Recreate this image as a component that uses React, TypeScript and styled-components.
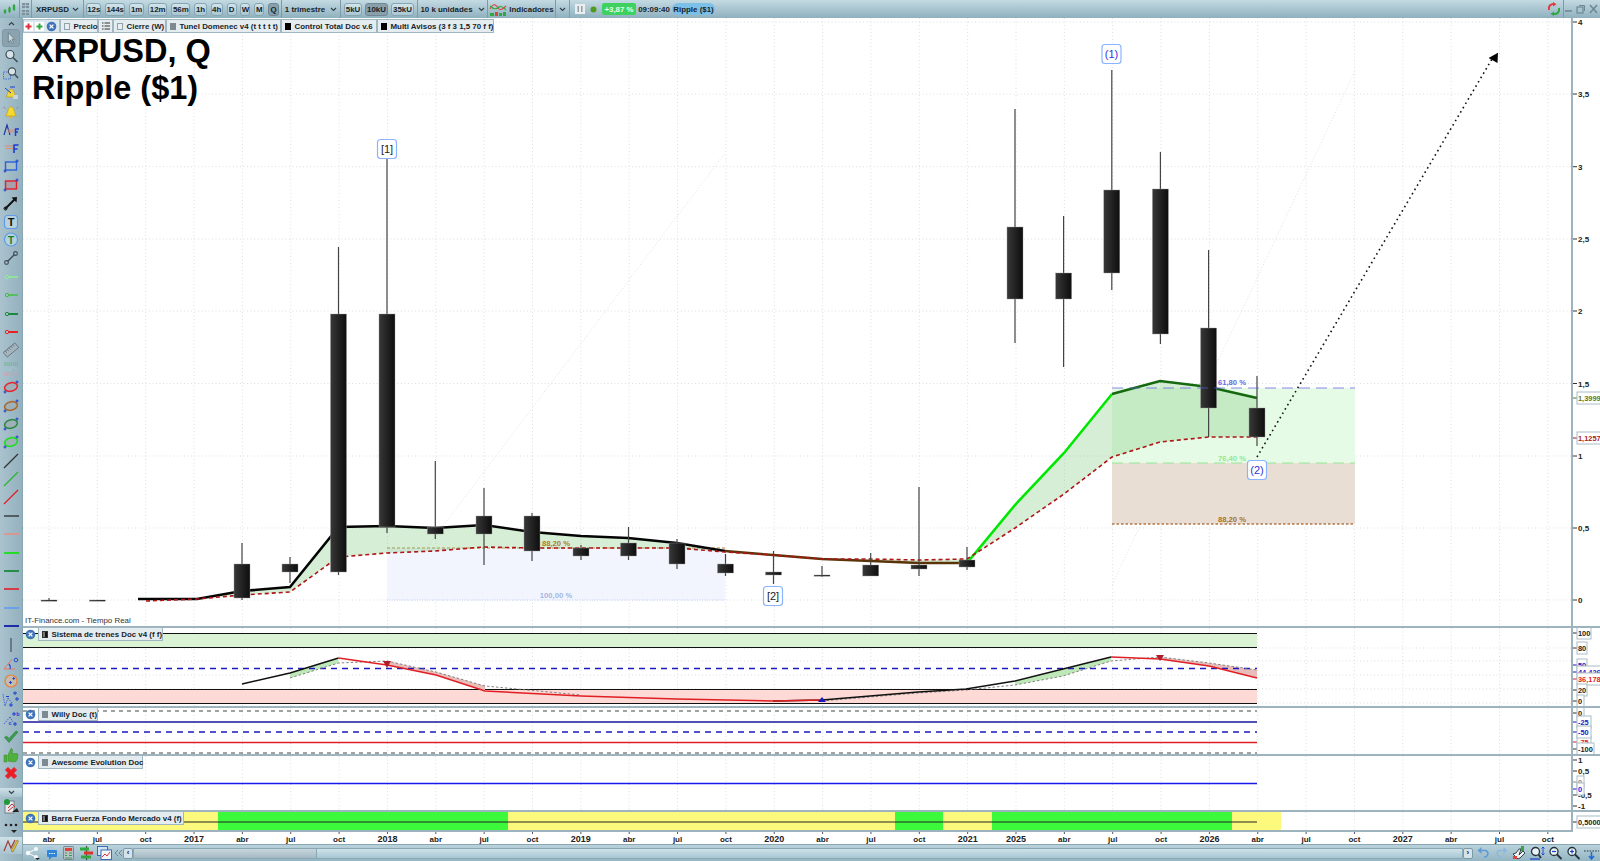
import React from 'react';
import styled, { createGlobalStyle } from 'styled-components';

const FONT = '"Liberation Sans", Arial, sans-serif';
const PLOT_END = 1257;
const AXIS_X = 1572;

type Pt = number[];
const pts = (a: Pt[]) => a.map((p) => p.join(',')).join(' ');

const qx = (i: number) => 49 + 48.35 * i;
const QUARTERS = Array.from({ length: 32 }, (_, i) => qx(i));

const CANDLES = [
  [qx(0), 598, 600, 600.6, 601],
  [qx(1), 600, 600, 600.6, 601],
  [242, 543, 564, 598, 600],
  [290, 557, 564, 572, 583],
  [338.5, 247, 314, 572, 575],
  [387, 159, 314, 527, 533],
  [435.3, 461, 527, 534, 539],
  [484, 488, 516, 534, 565],
  [532, 513, 516, 551, 561],
  [581, 545, 548, 556, 560],
  [628.5, 527, 543, 556, 560],
  [677, 539, 543, 564, 569],
  [725.5, 554, 564, 573, 576],
  [773.5, 551, 572, 575, 584],
  [822, 566, 575, 576, 577],
  [870.7, 553, 565, 576, 576],
  [919, 487, 565, 569, 576],
  [967, 547, 560, 567, 570],
  [1015, 109, 227, 299, 343],
  [1063.6, 216, 273, 299, 367],
  [1111.8, 70, 190, 273, 290],
  [1160.4, 152, 189, 334, 344],
  [1208.6, 250, 328, 408, 437],
  [1257, 376, 408, 437, 446],
];

const TOP_BLACK: Pt[] = [[138, 599], [197, 599], [242, 591], [290, 587], [338.5, 527], [387, 526], [435, 528], [484, 525], [532, 532], [581, 536], [628, 538], [677, 543], [725, 551]];
const TOP_BROWN: Pt[] = [[725, 551], [773, 555], [822, 559], [871, 561], [919, 563], [967, 563]];
const TOP_GREEN: Pt[] = [[967, 563], [1015, 505], [1064, 453], [1112, 394]];
const TOP_DARK: Pt[] = [[1112, 394], [1160, 381], [1209, 387], [1257, 398]];
const BOTTOM: Pt[] = [[146, 601], [197, 599], [242, 595], [290, 592], [338.5, 557], [387, 553], [435, 551], [484, 547], [532, 548], [581, 548], [628, 548], [677, 548], [725, 552], [773, 555], [822, 559], [871, 559], [919, 560], [967, 559], [1015, 528], [1064, 494], [1112, 457], [1160, 442], [1209, 437], [1257, 437]];
const AREA = [...TOP_BLACK.slice(1), ...TOP_BROWN.slice(1), ...TOP_GREEN.slice(1), ...TOP_DARK.slice(1), ...[...BOTTOM].reverse().slice(0, -1)];

const TIME_LABELS = ['abr', 'jul', 'oct', '2017', 'abr', 'jul', 'oct', '2018', 'abr', 'jul', 'oct', '2019', 'abr', 'jul', 'oct', '2020', 'abr', 'jul', 'oct', '2021', '2025', 'abr', 'jul', 'oct', '2026', 'abr', 'jul', 'oct', '2027', 'abr', 'jul', 'oct'];

const MAIN_TICKS: [string, number][] = [['4', 22], ['3,5', 94], ['3', 166.7], ['2,5', 239], ['2', 311], ['1,5', 383.5], ['1', 456], ['0,5', 528], ['0', 600]];

const BARS: [number, number, string][] = [
  [23, 218, '#fdf97c'],
  [218, 508, '#3cf93c'],
  [508, 895, '#fdf97c'],
  [895, 943, '#3cf93c'],
  [943, 992, '#fdf97c'],
  [992, 1232, '#3cf93c'],
  [1232, 1281, '#fdf97c'],
];

const Global = createGlobalStyle`
  html, body { margin: 0; padding: 0; overflow: hidden; background: #fff; }
  #root { width: 1600px; height: 861px; }
`;

const Page = styled.div`
  width: 1600px;
  height: 861px;
  display: flex;
  flex-direction: column;
  font-family: ${FONT};
  color: #17242b;
  overflow: hidden;
`;

const TopBar = styled.div`
  height: 18px;
  flex: none;
  display: flex;
  align-items: stretch;
  background: linear-gradient(#c4dae2, #a6c3cf 55%, #8fb0be);
  font-size: 7.9px;
  font-weight: 700;
  white-space: nowrap;
`;

const ToolCell = styled.div<{ $w: number; $gap?: number; $plain?: boolean }>`
  width: ${(p) => p.$w}px;
  flex: none;
  display: flex;
  align-items: center;
  justify-content: center;
  gap: ${(p) => p.$gap ?? 0}px;
  border-right: ${(p) => (p.$plain ? 'none' : '1px solid #7d9aa8')};
  box-sizing: border-box;
`;

const ToolButton = styled.div<{ $w: number; $active?: boolean }>`
  width: ${(p) => p.$w}px;
  height: 13px;
  flex: none;
  display: flex;
  align-items: center;
  justify-content: center;
  box-sizing: border-box;
  border: 1px solid ${(p) => (p.$active ? '#6f8894' : '#86a5b2')};
  border-radius: 3px;
  background: ${(p) => (p.$active ? '#87a0ac' : 'linear-gradient(#d3e4ea, #a9c6d1)')};
`;

const Badge = styled.div<{ $bg: string; $color: string; $w: number; $r: number }>`
  width: ${(p) => p.$w}px;
  height: 12px;
  flex: none;
  align-self: center;
  display: flex;
  align-items: center;
  justify-content: center;
  border-radius: ${(p) => p.$r}px;
  background: ${(p) => p.$bg};
  color: ${(p) => p.$color};
`;

const Spacer = styled.div`
  flex: 1;
`;

const Body = styled.div`
  flex: 1;
  display: flex;
  min-height: 0;
`;

const Rail = styled.div`
  width: 23px;
  flex: none;
  display: flex;
  flex-direction: column;
  align-items: stretch;
  background: linear-gradient(90deg, #a9c2ce, #94b1be);
  border-right: 1px solid #8aa7b4;
  box-sizing: border-box;
`;

const RailFold = styled.div<{ $h: number; $tone?: boolean }>`
  height: ${(p) => p.$h}px;
  flex: none;
  display: flex;
  align-items: center;
  justify-content: center;
  background: ${(p) => (p.$tone ? 'linear-gradient(#cfe1e8, #a8c4cf)' : 'transparent')};
`;

const RailItem = styled.div<{ $active?: boolean }>`
  height: 18.4px;
  flex: none;
  display: flex;
  align-items: center;
  justify-content: center;
  box-sizing: border-box;
  ${(p) => p.$active && 'background: #8ba3ae; border: 1px solid #7f98a4; border-radius: 3px; margin: 0 2px;'}
`;

const Column = styled.div`
  flex: 1;
  min-width: 0;
  display: flex;
  flex-direction: column;
`;

const Panel = styled.div<{ $h: number; $sep?: boolean }>`
  height: ${(p) => p.$h}px;
  flex: none;
  position: relative;
  box-sizing: border-box;
  border-top: ${(p) => (p.$sep ? '2px solid #9db4bf' : 'none')};
`;

const Plot = styled.svg`
  display: block;
`;

const LegendRow = styled.div`
  position: absolute;
  top: 1px;
  left: 0;
  display: flex;
  align-items: stretch;
  height: 14px;
  font-size: 7.9px;
  font-weight: 700;
  white-space: nowrap;
`;

const LegendTools = styled.div`
  width: 37px;
  display: flex;
  align-items: center;
  justify-content: flex-end;
  gap: 2px;
  padding-right: 2px;
  box-sizing: border-box;
  background: #dbe7ec;
  border: 1px solid #a9bfc9;
`;

const LegendItem = styled.div<{ $w: number }>`
  width: ${(p) => p.$w}px;
  display: flex;
  align-items: center;
  gap: 3.5px;
  padding-left: 3px;
  box-sizing: border-box;
  background: #e4ecf0;
  border: 1px solid #a0b7c2;
`;

const Swatch = styled.span<{ $color: string; $border?: string }>`
  width: 6px;
  height: 7px;
  flex: none;
  background: ${(p) => p.$color};
  border: 1px solid ${(p) => p.$border ?? p.$color};
  box-sizing: border-box;
`;

const SplitSwatch = styled(Swatch)`
  background: linear-gradient(90deg, #777 45%, #111 45%);
  border-color: #333;
`;

const PanelLegend = styled(LegendRow)`
  top: -1px;
  left: 1px;
  gap: 1px;
`;

const CloseCell = styled.div`
  width: 13px;
  display: flex;
  align-items: center;
  justify-content: center;
`;

const Title = styled.div`
  position: absolute;
  top: 15px;
  left: 9px;
  font-size: 32.5px;
  line-height: 36.5px;
  font-weight: 700;
  color: #000;
`;

const Source = styled.div`
  position: absolute;
  left: 2px;
  bottom: 0;
  font-size: 7.9px;
  line-height: 11px;
  color: #333;
`;

const AxisText = styled.text<{ $color?: string }>`
  font-family: ${FONT};
  font-size: 8px;
  font-weight: 700;
  fill: ${(p) => p.$color ?? '#222'};
`;

const BoxText = styled(AxisText)`
  font-size: 7.4px;
`;

const FibText = styled.text<{ $color: string }>`
  font-family: ${FONT};
  font-size: 7.7px;
  font-weight: 700;
  text-anchor: middle;
  fill: ${(p) => p.$color};
`;

const TagText = styled.text<{ $color: string }>`
  font-family: ${FONT};
  font-size: 11px;
  text-anchor: middle;
  fill: ${(p) => p.$color};
`;

const TimeText = styled.text<{ $year: boolean }>`
  font-family: ${FONT};
  font-size: ${(p) => (p.$year ? 9 : 8)}px;
  font-weight: 700;
  text-anchor: middle;
  fill: #222;
`;

const BottomBar = styled.div`
  height: 17px;
  flex: none;
  display: flex;
  align-items: center;
  background: linear-gradient(#b9d2dc, #94b5c3);
  border-top: 1px solid #8aa7b4;
  box-sizing: border-box;
`;

const BottomIcon = styled.div<{ $w: number }>`
  width: ${(p) => p.$w}px;
  flex: none;
  display: flex;
  align-items: center;
  justify-content: center;
`;

const ScrollTrack = styled.div`
  flex: 1;
  height: 11px;
  display: flex;
  box-sizing: border-box;
  border: 1px solid #8aa7b4;
  background: linear-gradient(#cfe3ea, #a6c6d3);
`;

const ScrollThumb = styled.div`
  width: 182px;
  background: linear-gradient(#c7d6dc, #a4b9c3);
  border-right: 1px solid #8aa7b4;
`;

const ScrollEnd = styled.div`
  width: 10px;
  flex: none;
  height: 11px;
  display: flex;
  align-items: center;
  justify-content: center;
  box-sizing: border-box;
  border: 1px solid #7d9aa8;
  border-radius: 2px;
  background: #d4e3e9;
  font-size: 8px;
  font-weight: 700;
  line-height: 1;
`;

/* ---- small drawings ---- */

const Chevron = ({ up }: { up?: boolean }) => (
  <svg width="7" height="5" viewBox="0 0 7 5">
    <path d={up ? 'M1 4 L3.5 1.5 L6 4' : 'M1 1 L3.5 3.5 L6 1'} fill="none" stroke="#33444c" strokeWidth="1.2" />
  </svg>
);

const Check = () => <Swatch $color="#e9eef0" $border="#8fa3ad" />;

const CloseDot = () => (
  <svg width="11" height="11" viewBox="0 0 11 11">
    <circle cx="5.5" cy="5.5" r="4.8" fill="#3f74b8" />
    <path d="M3.6 3.6 L7.4 7.4 M7.4 3.6 L3.6 7.4" stroke="#fff" strokeWidth="1.3" />
  </svg>
);

const PlusBox = ({ color }: { color: string }) => (
  <svg width="9" height="9" viewBox="0 0 9 9">
    <rect x="0" y="0" width="9" height="9" fill="#fff" />
    <path d="M4.5 1.5 V7.5 M1.5 4.5 H7.5" stroke={color} strokeWidth="2" />
  </svg>
);

const Ri = ({ children }: { children: React.ReactNode }) => (
  <svg width="18" height="18" viewBox="0 0 18 18">
    {children}
  </svg>
);

const ringLine = (color: string, w = 1.5) => (
  <Ri>
    <circle cx="5" cy="9" r="1.7" fill="none" stroke={color} strokeWidth="1" />
    <path d={`M6.7 9 H16`} stroke={color} strokeWidth={w} />
  </Ri>
);

const ellipse = (color: string) => (
  <Ri>
    <ellipse cx="9" cy="9" rx="6.5" ry="4.2" transform="rotate(-15 9 9)" fill="#9fb0b8" stroke={color} strokeWidth="1.5" />
    <path d="M1.5 14 H4.5 M3 12.5 V15.5 M13.5 4 H16.5 M15 2.5 V5.5" stroke="#1a3fd0" strokeWidth="1" />
  </Ri>
);

const diag = (color: string) => (
  <Ri>
    <path d="M2 16 L16 2" stroke={color} strokeWidth="1.2" />
  </Ri>
);

const hline = (color: string, w = 1.2) => (
  <Ri>
    <path d="M2 9 H17" stroke={color} strokeWidth={w} />
  </Ri>
);

const boxedRect = (stroke: string, fill: string) => (
  <Ri>
    <rect x="3.5" y="5" width="11" height="8" fill={fill} stroke={stroke} strokeWidth="1.4" />
    <path d="M1.5 14 H4.5 M3 12.5 V15.5 M13.5 4 H16.5 M15 2.5 V5.5" stroke="#1a3fd0" strokeWidth="1" />
  </Ri>
);

const RAIL_ICONS: React.ReactNode[] = [
  <Ri><path d="M6 3 V14 L8.5 11.5 L10.5 15 L12 14 L10 10.5 L13 10.2 Z" fill="#c9d6dc" stroke="#5d6f78" strokeWidth="0.8" /></Ri>,
  <Ri><circle cx="8" cy="7.5" r="4" fill="#d6e4ea" stroke="#3f4e56" strokeWidth="1.2" /><path d="M11 10.5 L15.5 15" stroke="#3f4e56" strokeWidth="1.6" /></Ri>,
  <Ri><rect x="1.5" y="7" width="7" height="7" fill="none" stroke="#2b5bd0" strokeWidth="0.8" strokeDasharray="1.5 1" /><circle cx="10" cy="6.5" r="3.6" fill="#d6e4ea" stroke="#3f4e56" strokeWidth="1.1" /><path d="M12.5 9 L16 13" stroke="#3f4e56" strokeWidth="1.5" /></Ri>,
  <Ri><path d="M4 13 C6 11 5 6 9 5 C13 6 12 11 14 13 Z" fill="#f1d53a" stroke="#b69a18" strokeWidth="0.6" /><path d="M3 4 L9 9 M8 3 L13 3" stroke="#1a3fd0" strokeWidth="1" /><rect x="11" y="11" width="5" height="4" fill="#c9d6dc" /></Ri>,
  <Ri><path d="M3.5 14 C6 12 5 6 9 4.5 C13 6 12 12 14.5 14 Z" fill="#f6d92f" stroke="#b69a18" strokeWidth="0.6" /><circle cx="9" cy="15" r="1.4" fill="#e8b21c" /><path d="M1.5 5 L3.5 6.5 M16.5 5 L14.5 6.5" stroke="#7b8a92" strokeWidth="1" /></Ri>,
  <Ri><path d="M2 14 L5 4 L8 14" fill="none" stroke="#1a2fa0" strokeWidth="1.1" /><path d="M6 9 H13 M6 11 H12" stroke="#e08a70" strokeWidth="1" /><path d="M13 8 H17 M13.5 8 V15 M13.5 11 H16" stroke="#1a3fd0" strokeWidth="1.5" fill="none" /></Ri>,
  <Ri><path d="M3 7 H12 M4 9.5 H12" stroke="#e08a70" strokeWidth="1" /><path d="M11.5 6 H16.5 M12 6 V14 M12 10 H15.5" stroke="#1a3fd0" strokeWidth="1.6" fill="none" /></Ri>,
  boxedRect('#2a62d8', '#a8bfca'),
  boxedRect('#e01f2a', '#a99fa8'),
  <Ri><path d="M3 15 L13 5" stroke="#111" strokeWidth="2" /><path d="M9.5 3.5 L15 3 L14.5 8.5 Z" fill="#111" /><circle cx="3.5" cy="14.5" r="1.5" fill="none" stroke="#111" strokeWidth="1" /></Ri>,
  <Ri><rect x="2.5" y="2.5" width="13" height="13" rx="3" fill="#b8d2dc" stroke="#5f9be8" strokeWidth="1.2" /><text x="9" y="13" textAnchor="middle" fontSize="11" fontWeight="700" fontFamily={FONT} fill="#111">T</text></Ri>,
  <Ri><circle cx="9" cy="8.5" r="6.5" fill="#b8d2dc" stroke="#5f9be8" strokeWidth="1.2" /><text x="9" y="12.5" textAnchor="middle" fontSize="10.5" fontWeight="700" fontFamily={FONT} fill="#14802a">T</text></Ri>,
  <Ri><path d="M5.5 12.5 L12.5 5.5" stroke="#3f4e56" strokeWidth="1.4" /><circle cx="4.5" cy="13.5" r="1.9" fill="none" stroke="#3f4e56" strokeWidth="1.1" /><circle cx="13.5" cy="4.5" r="1.9" fill="none" stroke="#3f4e56" strokeWidth="1.1" /></Ri>,
  ringLine('#8ef08e'),
  ringLine('#3fbf3f'),
  ringLine('#1a8a3a', 2),
  ringLine('#ec2222', 2),
  <Ri><g transform="rotate(-40 9 9)"><rect x="1.5" y="6" width="15" height="6" fill="#a6b6be" stroke="#5f6f78" strokeWidth="0.8" /><path d="M4 6 V8.5 M6.5 6 V8.5 M9 6 V8.5 M11.5 6 V8.5 M14 6 V8.5" stroke="#5f6f78" strokeWidth="0.7" /></g></Ri>,
  <Ri><path d="M2 3 H16 M2 5 H16" stroke="#66b27a" strokeWidth="0.9" strokeDasharray="1.5 0.7" /><path d="M2 13 H16 M2 15 H16" stroke="#e39aa0" strokeWidth="0.9" strokeDasharray="1.5 0.7" /><path d="M2 11 L5 7 L8 11 L11 6 L15 10" fill="none" stroke="#9fc6cf" strokeWidth="1" /></Ri>,
  ellipse('#e8242a'),
  ellipse('#a8672a'),
  ellipse('#2a8a3f'),
  ellipse('#18e018'),
  diag('#333'),
  diag('#2fb32f'),
  diag('#e01f2a'),
  hline('#222'),
  hline('#f08a78', 1.4),
  hline('#18e018', 1.8),
  hline('#1a8a3a', 1.8),
  hline('#e01f2a', 1.6),
  hline('#5f9bf0', 1.6),
  hline('#0c1fa8', 1.8),
  <Ri><path d="M9 2 V16" stroke="#5a6b74" strokeWidth="1.6" /></Ri>,
  <Ri><path d="M2 15 H13 M2 15 L10 5" fill="none" stroke="#e87468" strokeWidth="1" /><path d="M7 10 A5 5 0 0 1 8 15" fill="none" stroke="#1a3fd0" strokeWidth="1.2" /><circle cx="14" cy="6" r="1.8" fill="none" stroke="#1a3fd0" strokeWidth="0.9" /></Ri>,
  <Ri><circle cx="9" cy="9" r="6" fill="#c5bcae" stroke="#e8823a" strokeWidth="1.2" /><path d="M7 10.5 H10 M8.5 9 V12 M10.5 6.5 H13 M11.7 5.2 V7.8" stroke="#1a3fd0" strokeWidth="1" /></Ri>,
  <Ri><path d="M1 3 L3 15 M3 15 L6 7 M6 7 L10 12" fill="none" stroke="#1a3fd0" strokeWidth="0.7" strokeDasharray="1.5 1" /><path d="M11 2 H15 M13 0.5 V4 M13 8 H17 M15 6 V10 M7 14 H11 M9 12 V16 M4 5.5 H7" stroke="#1a3fd0" strokeWidth="1" /></Ri>,
  <Ri><path d="M2 15 L8 8 M8 8 L11 13" fill="none" stroke="#1a3fd0" strokeWidth="0.7" strokeDasharray="1.5 1" /><path d="M10 5 H14 M12 3 V7 M11 15 H15 M13 13 V17" stroke="#1a3fd0" strokeWidth="1" /><text x="16" y="7" fontSize="5.5" fontWeight="700" fontFamily={FONT} fill="#1a3fd0" textAnchor="middle">b</text><text x="8" y="16" fontSize="5.5" fontWeight="700" fontFamily={FONT} fill="#1a3fd0" textAnchor="middle">c</text></Ri>,
  <Ri><path d="M2.5 9.5 L7 14.5 L16 4 L14 3 L7 10.5 L4.5 8 Z" fill="#3c9c4e" stroke="#2a7d3c" strokeWidth="0.6" /></Ri>,
  <Ri><path d="M2 9 H5 V16 H2 Z M6 9 L9 2.5 C11 2.5 11 5 10 7.5 H15 C16.5 8 16 10 15.5 11 C15.5 13 15 14 14 15.5 C12 16 8 16 6 15 Z" fill="#4fb03c" stroke="#3a8a2c" strokeWidth="0.5" /></Ri>,
  <Ri><path d="M3.5 6 L6 3.5 L9 6.5 L12 3.5 L14.5 6 L11.5 9 L14.5 12 L12 14.5 L9 11.5 L6 14.5 L3.5 12 L6.5 9 Z" fill="#ec1c24" stroke="#ec1c24" strokeWidth="1" strokeLinejoin="round" /></Ri>,
];

const LogoCandles = () => (
  <svg width="13" height="12" viewBox="0 0 13 12">
    <path d="M2 6 V11 M6.5 3.5 V10 M11 1 V8" stroke="#2d8a3a" strokeWidth="0.8" />
    <rect x="0.8" y="7" width="2.4" height="3" fill="#2fa83f" />
    <rect x="5.3" y="4.5" width="2.4" height="4.5" fill="#2fa83f" />
    <rect x="9.8" y="2" width="2.4" height="5" fill="#2fa83f" />
  </svg>
);

const Grip = () => (
  <svg width="7" height="12" viewBox="0 0 7 12">
    <rect x="0" y="0" width="7" height="5" fill="#7d929c" />
    <rect x="0" y="7" width="7" height="5" fill="#7d929c" />
    <path d="M3.5 0 V12 M0 2.5 H7 M0 9.5 H7" stroke="#b6c8d0" strokeWidth="0.7" />
  </svg>
);

const IndicatorsIcon = () => (
  <svg width="18" height="14" viewBox="0 0 18 14">
    <rect x="1" y="11" width="4" height="3" fill="#2fa83f" />
    <rect x="6" y="10" width="3" height="4" fill="#d04a3a" />
    <rect x="10" y="11" width="3" height="3" fill="#2fa83f" />
    <rect x="14" y="10" width="3" height="4" fill="#2fa83f" />
    <path d="M1 7 C4 1 7 2 9 6 C11 9 14 7 17 4" fill="none" stroke="#e0423a" strokeWidth="1.1" />
    <path d="M1 4 C4 7 7 8 10 5 C12 3 15 6 17 8" fill="none" stroke="#2fa83f" strokeWidth="1.1" />
  </svg>
);

const PauseIcon = () => (
  <svg width="10" height="10" viewBox="0 0 10 10">
    <rect width="10" height="10" fill="#e9eef0" />
    <path d="M3.2 2 V8 M6.8 2 V8" stroke="#8a98a0" strokeWidth="1.4" />
  </svg>
);

const SyncIcon = () => (
  <svg width="14" height="14" viewBox="0 0 14 14">
    <path d="M2 8 C1 4 4 1.5 7.5 2" fill="none" stroke="#e23a3a" strokeWidth="2" />
    <path d="M7 0 L10.5 2.2 L7 4.5 Z" fill="#e23a3a" transform="translate(-1 0)" />
    <path d="M12 6 C13 10 10 12.5 6.5 12" fill="none" stroke="#2fa83f" strokeWidth="2" />
    <path d="M7 9.5 L3.5 11.8 L7 14 Z" fill="#2fa83f" />
  </svg>
);

const WinButtons = () => (
  <svg width="36" height="12" viewBox="0 0 36 12">
    <path d="M1 8 H8" stroke="#6f8894" strokeWidth="1.6" />
    <rect x="13" y="4" width="6" height="6" fill="none" stroke="#6f8894" strokeWidth="1.2" />
    <path d="M15 2.5 H20.5 V8" fill="none" stroke="#6f8894" strokeWidth="1" />
    <path d="M26 2 L33 10 M33 2 L26 10" stroke="#6f8894" strokeWidth="1.6" />
  </svg>
);

const Bi = ({ children }: { children: React.ReactNode }) => (
  <svg width="15" height="14" viewBox="0 0 15 14">
    {children}
  </svg>
);

const Mag = ({ sign }: { sign?: string }) => (
  <Bi>
    <circle cx="6" cy="5.5" r="4" fill="#eaf3f6" stroke="#26323a" strokeWidth="1.3" />
    <path d="M9 8.5 L13.5 13" stroke="#26323a" strokeWidth="1.8" />
    {sign === '-' && <path d="M4 5.5 H8" stroke="#1a3fd0" strokeWidth="1.2" />}
    {sign === '+' && <path d="M4 5.5 H8 M6 3.5 V7.5" stroke="#1a3fd0" strokeWidth="1.2" />}
  </Bi>
);

const BOTTOM_LEFT: React.ReactNode[] = [
  <Bi><path d="M3 7 L11 3 M3 7 L11 11" stroke="#eef4f6" strokeWidth="1.2" /><circle cx="3" cy="7" r="2.2" fill="#f6f9fa" /><circle cx="11" cy="3" r="2" fill="#f6f9fa" /><circle cx="11" cy="11" r="2" fill="#f6f9fa" /><path d="M10 12 H15 L12.5 14 Z" fill="#222" /></Bi>,
  <Bi><rect x="1" y="1" width="9" height="7" rx="1" fill="#a8c8e0" /><rect x="4" y="4" width="10" height="7" rx="1" fill="#2f86d8" /><path d="M6 11 V14 L9 11 Z" fill="#2f86d8" /><path d="M6 7.5 H12" stroke="#fff" strokeWidth="1" strokeDasharray="1.4 1" /></Bi>,
  <Bi><rect x="2.5" y="0.5" width="10" height="13" rx="1" fill="#b7c2c8" stroke="#5f6f78" strokeWidth="0.7" /><rect x="4" y="2" width="7" height="3" fill="#e0423a" /><path d="M4 7 H6 M4 9.5 H6 M8 7 H11 M8 9.5 H11 M4 12 H11" stroke="#3c9c4e" strokeWidth="1.2" /></Bi>,
  <Bi><path d="M7.5 0 V14" stroke="#444" strokeWidth="1.2" /><rect x="1" y="1.5" width="9" height="3" fill="#2fa83f" /><rect x="5" y="5.5" width="9" height="3" fill="#d8352f" /><rect x="2" y="9.5" width="10" height="3" fill="#2fa83f" /></Bi>,
  <Bi><rect x="0.5" y="0.5" width="10" height="9" fill="#cfe3f2" stroke="#2f5fb0" strokeWidth="0.9" /><rect x="4" y="4" width="10.5" height="9.5" fill="#f2f6f8" stroke="#2f5fb0" strokeWidth="0.9" /><path d="M5 11 L8 8 L10 10 L13 6" fill="none" stroke="#d8352f" strokeWidth="1" /></Bi>,
];

const BOTTOM_RIGHT: React.ReactNode[] = [
  <Bi><path d="M4 4.5 H9 C13 4.5 13 11 8 11" fill="none" stroke="#5f9bd8" strokeWidth="1.6" /><path d="M5.5 1 L1.5 4.5 L5.5 8 Z" fill="#5f9bd8" /></Bi>,
  <Bi><path d="M11 4.5 H6 C2 4.5 2 11 7 11" fill="none" stroke="#8db8de" strokeWidth="1.6" /><path d="M9.5 1 L13.5 4.5 L9.5 8 Z" fill="#8db8de" /></Bi>,
  <Bi><path d="M1 8 L6 13 L8 12 L13 7 L11 5 L7 9 L9 3 H7 L4 7 Z" fill="#f0f4f6" stroke="#26323a" strokeWidth="0.9" /><rect x="9" y="0" width="3" height="5" fill="#2fa83f" /><rect x="1" y="10" width="4" height="3" fill="#e0423a" /></Bi>,
  <Bi><circle cx="5.5" cy="5.5" r="4" fill="#eaf3f6" stroke="#26323a" strokeWidth="1.3" /><path d="M8.5 8.5 L11 12" stroke="#26323a" strokeWidth="1.8" /><path d="M13 1 V9 M11.5 2.5 L13 1 L14.5 2.5 M11.5 7.5 L13 9 L14.5 7.5" fill="none" stroke="#1a3fd0" strokeWidth="0.9" /><path d="M0 13 H10" stroke="#1a3fd0" strokeWidth="1.2" /></Bi>,
  <Mag sign="-" />,
  <Mag sign="+" />,
  <Bi><path d="M0 5 H15" stroke="#26323a" strokeWidth="1" strokeDasharray="1.6 1.2" /><path d="M7.5 6 V13 M5 10 L7.5 13 L10 10" fill="none" stroke="#1a6ad8" strokeWidth="1.5" /></Bi>,
];

/* ---- chart parts ---- */

const GridLines = ({ ys, top, bottom }: { ys: number[]; top: number; bottom: number }) => (
  <g stroke="#dcdfe0" strokeWidth="1" strokeDasharray="1 2.5">
    {QUARTERS.map((x) => (
      <line key={x} x1={x} x2={x} y1={top} y2={bottom} />
    ))}
    {ys.map((y) => (
      <line key={y} x1={23} x2={AXIS_X} y1={y} y2={y} />
    ))}
  </g>
);

const AxisLine = ({ top, bottom }: { top: number; bottom: number }) => (
  <line x1={AXIS_X} x2={AXIS_X} y1={top} y2={bottom} stroke="#9db4bf" strokeWidth="2" />
);

const Tick = ({ y, label, color }: { y: number; label: string; color?: string }) => (
  <g>
    <line x1={AXIS_X + 1} x2={AXIS_X + 5} y1={y} y2={y} stroke={color ?? '#333'} strokeWidth="1" />
    <AxisText x={AXIS_X + 6} y={y + 3} $color={color}>
      {label}
    </AxisText>
  </g>
);

const BoxTick = ({ y, label, w, color }: { y: number; label: string; w: number; color?: string }) => (
  <g>
    <line x1={AXIS_X + 1} x2={AXIS_X + 5} y1={y} y2={y} stroke={color ?? '#333'} strokeWidth="1" />
    <rect x={AXIS_X + 5} y={y - 6} width={w} height={12} fill="#fff" stroke="#a9bcc6" strokeWidth="1" />
    <BoxText x={AXIS_X + 6} y={y + 3} $color={color}>
      {label}
    </BoxText>
  </g>
);

const Tag = ({ x, y, label, color }: { x: number; y: number; label: string; color: string }) => (
  <g>
    <rect x={x - 9.5} y={y - 9.5} width={19} height={19} rx="3" fill="#fff" stroke="#8ab4ff" strokeWidth="1.2" />
    <TagText x={x} y={y + 4} $color={color}>
      {label}
    </TagText>
  </g>
);

const Candle = ({ d }: { d: number[] }) => {
  const [x, high, top, bot, low] = d;
  return (
    <g>
      <line x1={x} x2={x} y1={high} y2={low} stroke="#444" strokeWidth="1.2" />
      <rect x={x - 8} y={top} width={16} height={Math.max(bot - top, 1.2)} fill="url(#body)" stroke="#999" strokeWidth="0.4" />
    </g>
  );
};

const MainChart = () => (
  <Plot width={1577} height={608} viewBox="23 18 1577 608">
    <defs>
      <linearGradient id="body" x1="0" x2="1" y1="0" y2="0">
        <stop offset="0" stopColor="#383838" />
        <stop offset="1" stopColor="#0d0d0d" />
      </linearGradient>
    </defs>
    <GridLines ys={MAIN_TICKS.map((t) => t[1])} top={18} bottom={626} />

    <line x1={387} y1={600} x2={725} y2={153} stroke="#dfe3e6" strokeDasharray="1 2" />
    <line x1={1112} y1={585} x2={1355} y2={71} stroke="#dfe3e6" strokeDasharray="1 2" />
    <rect x={387} y={548} width={338} height={52} fill="#f2f5fe" />
    <line x1={387} x2={725} y1={600} y2={600} stroke="#b9c9f0" strokeDasharray="1 1.5" />
    <line x1={387} x2={725} y1={548} y2={548} stroke="#b58a3a" strokeDasharray="3 2" />
    <FibText x={556} y={598} $color="#a5b6e2">100,00 %</FibText>

    <rect x={1112} y={388} width={243} height={75} fill="#e6fbe6" />
    <rect x={1112} y={463} width={243} height={61} fill="#e9ded4" />

    <polygon points={pts(AREA)} fill="#78c878" fillOpacity="0.3" />
    <polyline points={pts(TOP_BLACK)} fill="none" stroke="#050505" strokeWidth="2.6" />
    <polyline points={pts(TOP_BROWN)} fill="none" stroke="#5a3408" strokeWidth="2.4" />
    <polyline points={pts(TOP_GREEN)} fill="none" stroke="#00e800" strokeWidth="2.6" />
    <polyline points={pts(TOP_DARK)} fill="none" stroke="#156a10" strokeWidth="2.6" />
    <polyline points={pts(BOTTOM)} fill="none" stroke="#b01518" strokeWidth="1.6" strokeDasharray="4 3" />

    <FibText x={556} y={546} $color="#b07a2a">88,20 %</FibText>

    {CANDLES.map((c) => (
      <Candle key={c[0]} d={c} />
    ))}

    <line x1={1112} x2={1355} y1={388} y2={388} stroke="#5a5ae0" strokeOpacity="0.7" strokeWidth="1.2" strokeDasharray="11 6" />
    <line x1={1112} x2={1355} y1={463} y2={463} stroke="#93e893" strokeWidth="1.2" strokeDasharray="11 6" />
    <line x1={1112} x2={1355} y1={524} y2={524} stroke="#b0784a" strokeWidth="1.4" strokeDasharray="2.5 2" />
    <FibText x={1232} y={385} $color="#6a6ae0">61,80 %</FibText>
    <FibText x={1232} y={461} $color="#90ea90">76,40 %</FibText>
    <FibText x={1232} y={522} $color="#a8702f">88,20 %</FibText>

    <line x1={1257} y1={457} x2={1492} y2={59} stroke="#111" strokeWidth="1.6" strokeDasharray="1.6 3.4" />
    <polygon points="1498,52.7 1488.6,58 1497.5,63" fill="#000" />

    <Tag x={387} y={149} label="[1]" color="#222" />
    <Tag x={1111.5} y={54} label="(1)" color="#3232d8" />
    <Tag x={1257} y={470} label="(2)" color="#3232d8" />
    <Tag x={773} y={596} label="[2]" color="#222" />

    <AxisLine top={18} bottom={626} />
    {MAIN_TICKS.map(([l, y]) => (
      <Tick key={l} y={y} label={l} />
    ))}
    <BoxTick y={398} label="1,3999" w={30} color="#5d7a1c" />
    <BoxTick y={438} label="1,1257" w={30} color="#a81c1c" />
  </Plot>
);

const OSC_BLACK_A: Pt[] = [[242, 684], [290, 673], [338.5, 658]];
const OSC_RED: Pt[] = [[338.5, 658], [387, 665], [436, 675], [485, 691], [581, 696], [677, 699], [773, 701], [822, 700]];
const OSC_BLACK_B: Pt[] = [[773, 701], [822, 700], [870, 696], [918, 692], [966, 689], [1015, 681], [1063, 669], [1111, 657]];
const OSC_RED_B: Pt[] = [[1111, 657], [1160, 659], [1209, 666], [1257, 678]];
const OSC_SIGNAL_A: Pt[] = [[290, 678], [338.5, 663], [387, 661], [436, 672], [485, 686], [581, 695]];
const OSC_SIGNAL_B: Pt[] = [[822, 701], [870, 697], [918, 693], [966, 690], [1015, 685], [1063, 676], [1111, 661], [1160, 657], [1209, 663], [1257, 670]];

const between = (a: Pt[], b: Pt[]) => pts([...a, ...[...b].reverse()]);

const TrainsChart = () => (
  <Plot width={1577} height={78} viewBox="23 628 1577 78">
    <GridLines ys={[648, 661, 675, 689, 703]} top={628} bottom={706} />
    <rect x={23} y={633} width={PLOT_END - 23} height={14} fill="#d9f3d4" />
    <rect x={23} y={689} width={PLOT_END - 23} height={14} fill="#fedad6" />
    <g stroke="#111" strokeWidth="1">
      <line x1={23} x2={PLOT_END} y1={633.5} y2={633.5} />
      <line x1={23} x2={PLOT_END} y1={647.5} y2={647.5} />
      <line x1={23} x2={PLOT_END} y1={689.5} y2={689.5} />
      <line x1={23} x2={PLOT_END} y1={703.5} y2={703.5} />
    </g>
    <polygon points={between([[290, 673], [338.5, 658]], [[290, 678], [338.5, 663]])} fill="#bfe8b8" />
    <polygon points={between([[387, 665], [436, 675], [485, 691]], [[387, 661], [436, 672], [485, 686]])} fill="#e8bcb8" />
    <polygon points={between([[1015, 681], [1063, 669], [1111, 657]], [[1015, 685], [1063, 676], [1111, 661]])} fill="#bfe8b8" />
    <polygon points={between([[1160, 659], [1209, 666], [1257, 678]], [[1160, 657], [1209, 663], [1257, 670]])} fill="#e8bcb8" />
    <line x1={23} x2={PLOT_END} y1={668.5} y2={668.5} stroke="#1a1ac0" strokeWidth="1.5" strokeDasharray="6 5" />
    <polyline points={pts(OSC_SIGNAL_A)} fill="none" stroke="#777" strokeWidth="0.9" strokeDasharray="2.5 2" />
    <polyline points={pts(OSC_SIGNAL_B)} fill="none" stroke="#777" strokeWidth="0.9" strokeDasharray="2.5 2" />
    <polyline points={pts(OSC_BLACK_A)} fill="none" stroke="#111" strokeWidth="1.5" />
    <polyline points={pts(OSC_BLACK_B)} fill="none" stroke="#111" strokeWidth="1.5" />
    <polyline points={pts(OSC_RED)} fill="none" stroke="#e01f24" strokeWidth="1.5" />
    <polyline points={pts(OSC_RED_B)} fill="none" stroke="#e01f24" strokeWidth="1.5" />
    <polygon points="383,661 391,661 387,668" fill="#b01c28" />
    <polygon points="1156,655 1164,655 1160,661" fill="#b01c28" />
    <polygon points="818,702 826,702 822,697" fill="#1a1ac0" />
    <AxisLine top={628} bottom={706} />
    <BoxTick y={633} label="100" w={14} />
    <BoxTick y={648} label="80" w={10} />
    <BoxTick y={665} label="50" w={10} color="#1a1ac0" />
    <BoxTick y={672} label="44,426" w={24} color="#1a1ac0" />
    <BoxTick y={679} label="36,178" w={24} color="#e01f24" />
    <BoxTick y={690} label="20" w={10} />
    <BoxTick y={701} label="0" w={7} />
  </Plot>
);

const WillyChart = () => (
  <Plot width={1577} height={46} viewBox="23 708 1577 46">
    <GridLines ys={[]} top={708} bottom={754} />
    <line x1={23} x2={PLOT_END} y1={711} y2={711} stroke="#444" strokeDasharray="4 4" />
    <line x1={23} x2={PLOT_END} y1={722} y2={722} stroke="#16169c" strokeWidth="1.6" />
    <line x1={23} x2={PLOT_END} y1={732} y2={732} stroke="#1a1ac0" strokeWidth="1.5" strokeDasharray="6 5" />
    <line x1={23} x2={PLOT_END} y1={742.5} y2={742.5} stroke="#e01f24" strokeWidth="1.6" />
    <line x1={23} x2={PLOT_END} y1={753} y2={753} stroke="#444" strokeDasharray="4 4" />
    <AxisLine top={708} bottom={754} />
    <BoxTick y={713} label="0" w={7} />
    <BoxTick y={742} label="-75" w={14} color="#e01f24" />
    <BoxTick y={722} label="-25" w={14} color="#1a1ac0" />
    <BoxTick y={732} label="-50" w={14} color="#1a1ac0" />
    <BoxTick y={749} label="-100" w={17} />
  </Plot>
);

const AwesomeChart = () => (
  <Plot width={1577} height={54} viewBox="23 756 1577 54">
    <GridLines ys={[]} top={756} bottom={810} />
    <line x1={23} x2={PLOT_END} y1={783.5} y2={783.5} stroke="#1a1ae8" strokeWidth="1.5" />
    <AxisLine top={756} bottom={810} />
    <Tick y={760} label="1" />
    <Tick y={771} label="0,5" />
    <Tick y={795} label="-0,5" />
    <Tick y={806} label="-1" />
    <BoxTick y={782} label="0" w={7} color="#888" />
    <BoxTick y={789} label="0" w={7} color="#1a1ae8" />
  </Plot>
);

const ForceChart = () => (
  <Plot width={1577} height={19} viewBox="23 812 1577 19">
    <GridLines ys={[]} top={812} bottom={831} />
    {BARS.map(([a, b, c]) => (
      <rect key={a} x={a} y={811} width={b - a} height={20} fill={c} />
    ))}
    <line x1={23} x2={PLOT_END} y1={822} y2={822} stroke="#222" strokeWidth="1" />
    <line x1={23} x2={AXIS_X} y1={830.5} y2={830.5} stroke="#9db4bf" strokeWidth="1" />
    <AxisLine top={812} bottom={831} />
    <BoxTick y={822} label="0,5000" w={24} />
  </Plot>
);

const TimeAxis = () => (
  <Plot width={1577} height={13} viewBox="23 831 1577 13">
    <line x1={23} x2={AXIS_X + 1} y1={831} y2={831} stroke="#9db4bf" strokeWidth="2" />
    {TIME_LABELS.map((t, i) => (
      <g key={i}>
        <line x1={qx(i)} x2={qx(i)} y1={832} y2={834} stroke="#556" strokeWidth="1" />
        <TimeText x={qx(i)} y={842} $year={t.length === 4}>
          {t}
        </TimeText>
      </g>
    ))}
  </Plot>
);

const PERIODS: [string, number][] = [['12s', 15], ['144s', 20], ['1m', 15], ['12m', 19.5], ['56m', 19], ['1h', 12.5], ['4h', 12], ['D', 10], ['W', 10], ['M', 10], ['Q', 10.5]];
const TICKS_UNITS: [string, number, boolean][] = [['5kU', 18, false], ['10kU', 23, true], ['35kU', 23, false]];

const Legend = ({ w, title, swatch }: { w: number; title: string; swatch: React.ReactNode }) => (
  <PanelLegend>
    <CloseCell>
      <CloseDot />
    </CloseCell>
    <LegendItem $w={w}>
      {swatch}
      <span>{title}</span>
    </LegendItem>
  </PanelLegend>
);

export default function App() {
  return (
    <Page>
      <Global />
      <TopBar>
        <ToolCell $w={20}><LogoCandles /></ToolCell>
        <ToolCell $w={12}><Grip /></ToolCell>
        <ToolCell $w={52} $gap={3}>XRPUSD<Chevron /></ToolCell>
        <ToolCell $w={198} $gap={3.9}>
          {PERIODS.map(([l, w]) => (
            <ToolButton key={l} $w={w} $active={l === 'Q'}>{l}</ToolButton>
          ))}
        </ToolCell>
        <ToolCell $w={59} $gap={5}>1 trimestre<Chevron /></ToolCell>
        <ToolCell $w={77} $gap={3}>
          {TICKS_UNITS.map(([l, w, a]) => (
            <ToolButton key={l} $w={w} $active={a}>{l}</ToolButton>
          ))}
        </ToolCell>
        <ToolCell $w={70} $gap={5}>10 k unidades<Chevron /></ToolCell>
        <ToolCell $w={68} $gap={2}><IndicatorsIcon />Indicadores</ToolCell>
        <ToolCell $w={14}><Chevron /></ToolCell>
        <ToolCell $w={32} $gap={5} $plain><PauseIcon />
          <svg width="7" height="7" viewBox="0 0 7 7"><circle cx="3.5" cy="3.5" r="3" fill="#4f9a1f" /></svg>
        </ToolCell>
        <Badge $w={34} $r={2} $bg="#3fd160" $color="#e6ffe6">+3,87 %</Badge>
        <ToolCell $w={36} $plain>09:09:40</ToolCell>
        <Badge $w={43} $r={6} $bg="#7cc0e8" $color="#17242b">Ripple ($1)</Badge>
        <Spacer />
        <ToolCell $w={20}><SyncIcon /></ToolCell>
        <ToolCell $w={36} $plain><WinButtons /></ToolCell>
      </TopBar>
      <Body>
        <Rail>
          <RailFold $h={10.5}><Chevron up /></RailFold>
          {RAIL_ICONS.map((icon, i) => (
            <RailItem key={i} $active={i === 0}>{icon}</RailItem>
          ))}
          <RailFold $h={5.5} />
          <RailFold $h={9} $tone><Chevron /></RailFold>
          <RailFold $h={20}>
            <svg width="18" height="18" viewBox="0 0 18 18">
              <rect x="3" y="3" width="9" height="12" fill="#e4e8ea" stroke="#5f6f78" strokeWidth="0.8" />
              <circle cx="5" cy="4" r="3" fill="#1f9a3a" />
              <path d="M6 10 L10 6 L13 9 M6 13 L11 9" stroke="#c33" strokeWidth="1" fill="none" />
              <path d="M10 14 L15 10 L17 14 Z" fill="#222" />
            </svg>
          </RailFold>
          <RailFold $h={20}>
            <svg width="18" height="12" viewBox="0 0 18 12">
              <circle cx="4" cy="4" r="1.3" fill="#222" />
              <circle cx="9" cy="4" r="1.3" fill="#222" />
              <circle cx="14" cy="4" r="1.3" fill="#222" />
              <path d="M9 9 H15 L12 12 Z" fill="#222" />
            </svg>
          </RailFold>
          <RailFold $h={17} $tone>
            <svg width="16" height="15" viewBox="0 0 16 15">
              <path d="M1 13 L5 3 L8 10 L12 2" fill="none" stroke="#a03a3a" strokeWidth="1.2" />
              <path d="M8 13 L14 2 L15.5 3 L10 14 Z" fill="#e8c23a" stroke="#6b5a1a" strokeWidth="0.5" />
            </svg>
          </RailFold>
        </Rail>
        <Column>
          <Panel $h={608}>
            <MainChart />
            <LegendRow>
              <LegendTools>
                <PlusBox color="#e0303a" />
                <PlusBox color="#2fa83f" />
                <CloseDot />
              </LegendTools>
              <LegendItem $w={38}><Check />Precio</LegendItem>
              <LegendItem $w={15}>
                <svg width="8" height="8" viewBox="0 0 8 8">
                  <path d="M2.5 1 H8 M2.5 4 H8 M2.5 7 H8" stroke="#333" strokeWidth="1" />
                  <path d="M0 1 H1.5 M0 4 H1.5 M0 7 H1.5" stroke="#333" strokeWidth="1" />
                </svg>
              </LegendItem>
              <LegendItem $w={53}><Check />Cierre (W)</LegendItem>
              <LegendItem $w={115}><Swatch $color="#7d8a92" />Tunel Domenec v4 (t t t t t)</LegendItem>
              <LegendItem $w={96}><Swatch $color="#000" />Control Total Doc v.6</LegendItem>
              <LegendItem $w={117}><Swatch $color="#000" />Multi Avisos (3 f 3 1,5 70 f f)</LegendItem>
            </LegendRow>
            <Title>
              XRPUSD, Q
              <br />
              Ripple ($1)
            </Title>
            <Source>IT-Finance.com - Tiempo Real</Source>
          </Panel>
          <Panel $h={80} $sep>
            <TrainsChart />
            <Legend w={125} title="Sistema de trenes Doc v4 (f f)" swatch={<SplitSwatch $color="#111" />} />
          </Panel>
          <Panel $h={48} $sep>
            <WillyChart />
            <Legend w={60} title="Willy Doc (t)" swatch={<Swatch $color="#7d8a92" />} />
          </Panel>
          <Panel $h={56} $sep>
            <AwesomeChart />
            <Legend w={105} title="Awesome Evolution Doc" swatch={<Swatch $color="#7d8a92" />} />
          </Panel>
          <Panel $h={21} $sep>
            <ForceChart />
            <Legend w={146} title="Barra Fuerza Fondo Mercado v4 (f)" swatch={<SplitSwatch $color="#111" />} />
          </Panel>
          <TimeAxis />
          <BottomBar>
            {BOTTOM_LEFT.map((icon, i) => (
              <BottomIcon key={i} $w={18}>{icon}</BottomIcon>
            ))}
            <BottomIcon $w={10}>
              <svg width="9" height="8" viewBox="0 0 9 8">
                <path d="M4 1 L1 4 L4 7 M8 1 L5 4 L8 7" fill="none" stroke="#6f8894" strokeWidth="1" />
              </svg>
            </BottomIcon>
            <ScrollEnd>‹</ScrollEnd>
            <ScrollTrack><ScrollThumb /></ScrollTrack>
            <ScrollEnd>›</ScrollEnd>
            <BottomIcon $w={2} />
            {BOTTOM_RIGHT.map((icon, i) => (
              <BottomIcon key={i} $w={17.9}>{icon}</BottomIcon>
            ))}
          </BottomBar>
        </Column>
      </Body>
    </Page>
  );
}
